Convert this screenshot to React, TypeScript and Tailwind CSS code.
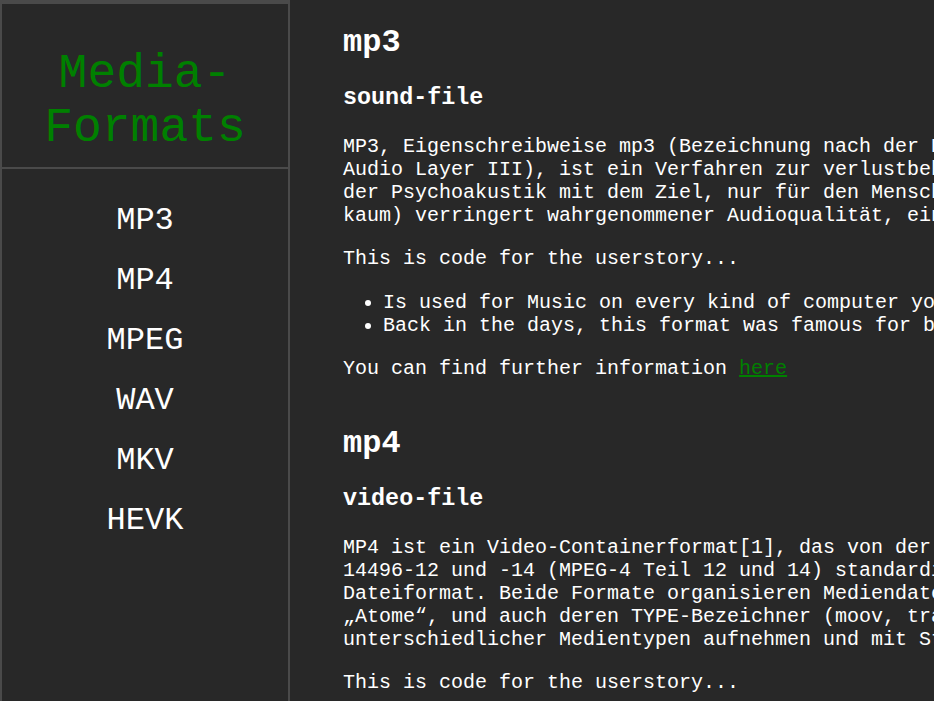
import React from 'react'

const navItems = ['MP3', 'MP4', 'MPEG', 'WAV', 'MKV', 'HEVK']

const mono = { fontFamily: '"Liberation Mono", "DejaVu Sans Mono", monospace' }

interface FormatSectionProps {
  title: string
  subtitle: string
  lines: string[]
  bullets?: string[]
  link?: boolean
}

const FormatSection: React.FC<FormatSectionProps> = ({
  title,
  subtitle,
  lines,
  bullets,
  link,
}) => {
  return (
    <section className="mb-[46px]">
      <h1 className="text-[32px] leading-[36px] font-bold">{title}</h1>
      <h2 className="mt-[24px] text-[23.4px] leading-[27px] font-bold">
        {subtitle}
      </h2>
      <p className="mt-[23px] whitespace-nowrap">
        {lines.map((line, i) => (
          <React.Fragment key={i}>
            {line}
            {i < lines.length - 1 && <br />}
          </React.Fragment>
        ))}
      </p>
      <p className="mt-[20px]">This is code for the userstory...</p>
      {bullets && (
        <ul className="mt-[21px] list-disc pl-10 whitespace-nowrap">
          {bullets.map((b) => (
            <li key={b}>{b}</li>
          ))}
        </ul>
      )}
      {link && (
        <p className="mt-[20px]">
          You can find further information{' '}
          <a href="#" className="text-[#008000] underline">
            here
          </a>
        </p>
      )}
    </section>
  )
}

const App: React.FC = () => {
  return (
    <div
      className="flex h-screen overflow-hidden bg-[#282828] text-white"
      style={mono}
    >
      {/* Sidebar */}
      <aside className="w-[290px] shrink-0 border-x-2 border-t-2 border-[#4a4a4a]">
        <header className="border-y-2 border-[#4a4a4a] pt-[43px] pb-[12px] text-center">
          <div className="text-[48px] leading-[54px] text-[#008000]">
            Media-
            <br />
            Formats
          </div>
        </header>
        <nav className="mt-[34px] flex flex-col items-center gap-[24px]">
          {navItems.map((item) => (
            <a
              key={item}
              href="#"
              className="text-[32px] leading-[36px] text-white"
            >
              {item}
            </a>
          ))}
        </nav>
      </aside>

      {/* Main content */}
      <main className="min-w-0 flex-1 pl-[53px] pt-[25px] text-[20px] leading-[23px]">
        <FormatSection
          title="mp3"
          subtitle="sound-file"
          lines={[
            'MP3, Eigenschreibweise mp3 (Bezeichnung nach der Dateinamenserweiterung; eigentlich MPEG-1 Audio Layer III oder MPEG-2',
            'Audio Layer III), ist ein Verfahren zur verlustbehafteten Kompression digital gespeicherter Audiodaten. MP3 bedient sich dabei',
            'der Psychoakustik mit dem Ziel, nur für den Menschen wahrnehmbare Signalanteile zu speichern. Dadurch wird, bei nicht (oder',
            'kaum) verringert wahrgenommener Audioqualität, eine starke Verringerung der Datenmenge möglich.',
          ]}
          bullets={[
            'Is used for Music on every kind of computer you can imagine',
            'Back in the days, this format was famous for burning CDs',
          ]}
          link
        />
        <FormatSection
          title="mp4"
          subtitle="video-file"
          lines={[
            'MP4 ist ein Video-Containerformat[1], das von der Moving Picture Experts Group (MPEG) als ISO/IEC',
            '14496-12 und -14 (MPEG-4 Teil 12 und 14) standardisiert wurde. Es basiert auf dem QuickTime',
            'Dateiformat. Beide Formate organisieren Mediendaten in hierarchisch verschachtelten Containern,',
            '„Atome“, und auch deren TYPE-Bezeichner (moov, trak, mdat) sind gleich. MP4 kann Spuren',
            'unterschiedlicher Medientypen aufnehmen und mit Steuerinformationen verknüpfen.',
          ]}
          bullets={[
            'Is used for Videos on every kind of device you can imagine',
            'Most streaming platforms deliver this format',
          ]}
          link
        />
      </main>
    </div>
  )
}

export default App
